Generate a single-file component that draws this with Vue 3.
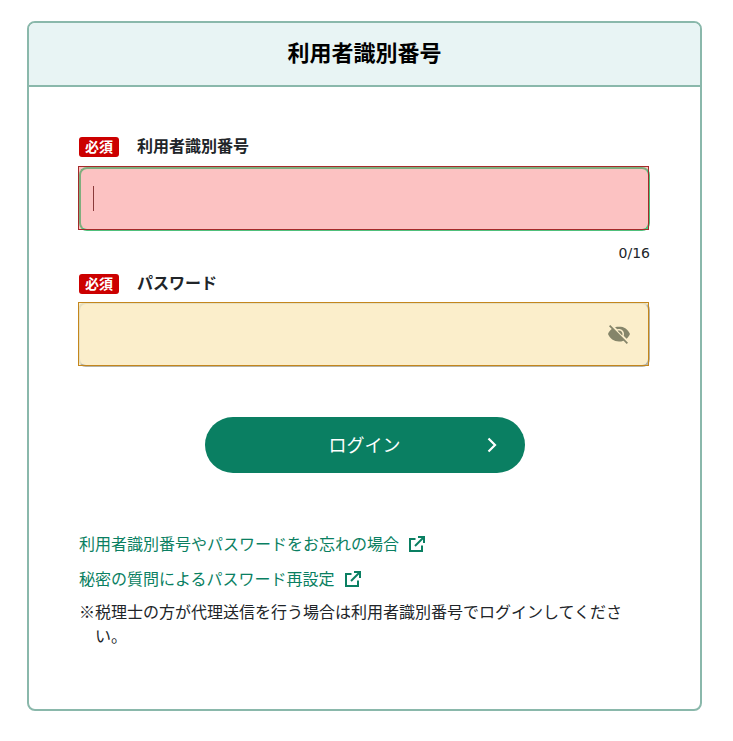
<script setup>
const links = [
  { id: 'forgot', text: '利用者識別番号やパスワードをお忘れの場合' },
  { id: 'secret', text: '秘密の質問によるパスワード再設定' },
];
</script>

<template>
  <div class="page">
    <div class="card">
      <h1 class="card-title">利用者識別番号</h1>

      <div class="card-body">
        <div class="label-row">
          <span class="required">必須</span>
          <label class="label">利用者識別番号</label>
        </div>
        <div class="field field-error">
          <div class="field-inner">
            <span class="caret"></span>
          </div>
        </div>
        <div class="counter">0/16</div>

        <div class="label-row label-row-pw">
          <span class="required">必須</span>
          <label class="label">パスワード</label>
        </div>
        <div class="field field-warn">
          <div class="field-inner">
            <svg class="eye" viewBox="0 0 24 24" width="24" height="24">
              <path fill="#85856a" d="M12 4.500c-1.400 0-2.740.25-3.980.7L10.180 7.360C10.740 7.130 11.350 7 12 7c2.760 0 5 2.240 5 5 0 .65-.13 1.260-.36 1.830l2.920 2.920c1.510-1.260 2.700-2.890 3.430-4.750-1.730-4.390-6-7.500-11-7.500zM2 4.270l2.280 2.280.46.46C3.080 8.300 1.780 10.020 1 12c1.730 4.390 6 7.500 11 7.500 1.550 0 3.030-.3 4.380-.84l.42.42L19.730 22 21 20.730 3.270 3 2 4.270z"/>
              <path fill="#85856a" d="M12 8.500c-.5 0-1 .1-1.400.3l4.600 4.600c.2-.4.300-.9.300-1.400 0-1.900-1.600-3.500-3.500-3.500zM8.800 10.600c-.2.400-.3.900-.3 1.400 0 1.900 1.600 3.500 3.500 3.500.5 0 1-.1 1.400-.3z"/>
            </svg>
          </div>
        </div>

        <div class="actions">
          <button class="login-btn" type="button">
            <span>ログイン</span>
            <svg class="chevron" viewBox="0 0 12 18" width="12" height="18">
              <path d="M2.500 2.500 9 9l-6.500 6.500" fill="none" stroke="#fff" stroke-width="2.200"/>
            </svg>
          </button>
        </div>

        <div class="links">
          <a v-for="link in links" :key="link.id" class="link" href="#">
            <span>{{ link.text }}</span>
            <svg class="ext" viewBox="0 0 16 16" width="16" height="16">
              <path d="M6.500 3H1v12h12V9.500" fill="none" stroke="#0a7f62" stroke-width="2"/>
              <path d="M6 10 14 2" fill="none" stroke="#0a7f62" stroke-width="2"/>
              <path d="M9 1h6v6" fill="none" stroke="#0a7f62" stroke-width="2"/>
            </svg>
          </a>
        </div>
        <p class="note">※税理士の方が代理送信を行う場合は利用者識別番号でログインしてください。</p>
      </div>
    </div>
  </div>
</template>

<style scoped>
.page {
  padding: 21px 31px 30px 27px;
  font-family: "Noto Sans CJK JP", "DejaVu Sans", sans-serif;
  color: #212529;
}

.card {
  border: 2px solid #8ab8ab;
  border-radius: 8px;
  overflow: hidden;
  background: #fff;
}

.card-title {
  margin: 0;
  height: 62px;
  line-height: 56px;
  background: #e8f4f4;
  border-bottom: 2px solid #8ab8ab;
  text-align: center;
  font-size: 22px;
  font-weight: 700;
  color: #000;
}

.card-body {
  padding: 50px 51px 62px 49px;
}

.label-row {
  display: flex;
  align-items: center;
  height: 20px;
  margin-bottom: 9px;
}

.label-row-pw {
  margin-bottom: 8px;
}

.required {
  width: 40px;
  height: 20px;
  line-height: 18px;
  margin-left: 1px;
  margin-right: 18px;
  border-radius: 3px;
  background: #cc0000;
  color: #fff;
  font-size: 14px;
  font-weight: 700;
  text-align: center;
}

.label {
  margin-bottom: 4px;
  font-size: 16px;
  font-weight: 700;
}

.field {
  position: relative;
  display: flex;
  height: 64px;
}

/* the focus rectangle lies over the rounded input edge */
.field::after {
  content: "";
  position: absolute;
  inset: 0;
  border: 1px solid;
  pointer-events: none;
}

.field-inner {
  flex: 1;
  box-sizing: border-box;
  display: flex;
  align-items: center;
  border-radius: 8px;
  border: 2px solid;
}

.field-error {
  background: #fcc2c2;
}

.field-error::after {
  border-color: #a52a2a;
}

.field-error .field-inner {
  margin: 1px -1px -1px 1px;
  padding-left: 12px;
  border-color: #7fae7e #4fc07c #4fc07c #7fae7e;
}

.field-warn {
  background: #fbeecb;
}

.field-warn::after {
  border-color: #c4861c;
}

.field-warn .field-inner {
  margin: 0 -1px -1px 0;
  border-color: #e6dfc0 #b5b3a6 #b5b3a6 #e6dfc0;
  justify-content: flex-end;
  padding-right: 17px;
}

.caret {
  display: block;
  width: 1px;
  height: 25px;
  margin-bottom: 2px;
  background: #8a3a3a;
}

.eye {
  display: block;
  margin-bottom: 2px;
}

.counter {
  height: 22px;
  line-height: 22px;
  margin: 12px -1px 10px 0;
  text-align: right;
  font-family: "DejaVu Sans", sans-serif;
  font-size: 14px;
}

.actions {
  display: flex;
  justify-content: center;
  margin-top: 51px;
  padding-left: 2px;
}

.login-btn {
  position: relative;
  width: 320px;
  height: 56px;
  border: none;
  border-radius: 28px;
  background: #0a7f62;
  color: #fff;
  font-family: inherit;
  font-size: 18px;
  padding: 0 0 3px;
}

.chevron {
  position: absolute;
  right: 27px;
  top: 19px;
}

.links {
  margin-top: 58px;
  margin-left: 1px;
  display: flex;
  flex-direction: column;
  gap: 11px;
}

.link {
  display: flex;
  align-items: center;
  gap: 10px;
  height: 24px;
  font-size: 16px;
  color: #0a7f62;
  text-decoration: none;
}

.ext {
  margin-top: 2px;
}

.note {
  margin: 9px 0 0 1px;
  width: 530px;
  padding-left: 1em;
  text-indent: -1em;
  font-size: 16px;
  line-height: 24px;
}
</style>

<style>
html, body {
  margin: 0;
  background: #fff;
}
</style>
